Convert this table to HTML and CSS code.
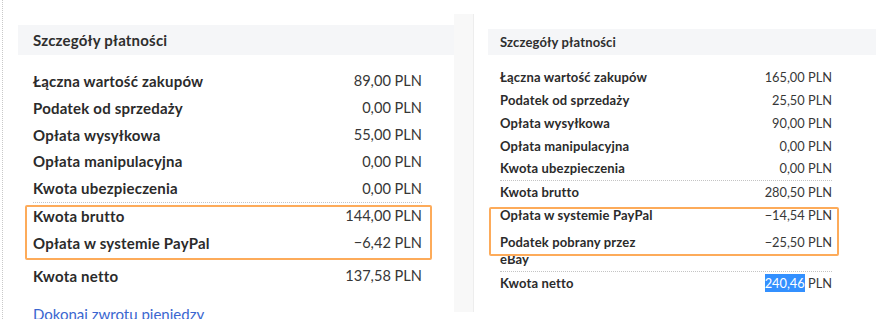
FILE: index.html
```html
<!DOCTYPE html>
<html lang="pl">
<head>
<meta charset="utf-8">
<title>Szczegóły płatności</title>
<link rel="stylesheet" href="styles.css">
</head>
<body>
<div class="page">
  <div class="edge"></div>

  <section class="panel panel-a">
    <div class="hdr">Szczegóły płatności</div>
    <div class="rows">
      <div class="group g1">
        <div class="row"><span class="lbl">Łączna wartość zakupów</span><span class="amt">89,00 PLN</span></div>
        <div class="row"><span class="lbl">Podatek od sprzedaży</span><span class="amt">0,00 PLN</span></div>
        <div class="row"><span class="lbl">Opłata wysyłkowa</span><span class="amt">55,00 PLN</span></div>
        <div class="row"><span class="lbl">Opłata manipulacyjna</span><span class="amt">0,00 PLN</span></div>
        <div class="row"><span class="lbl">Kwota ubezpieczenia</span><span class="amt">0,00 PLN</span></div>
      </div>
      <div class="group g2">
        <div class="row"><span class="lbl">Kwota brutto</span><span class="amt">144,00 PLN</span></div>
        <div class="row"><span class="lbl">Opłata w systemie PayPal</span><span class="amt">−6,42 PLN</span></div>
      </div>
      <div class="group g3">
        <div class="row"><span class="lbl">Kwota netto</span><span class="amt">137,58 PLN</span></div>
      </div>
    </div>
    <a class="link" href="#">Dokonaj zwrotu pieniędzy</a>
  </section>

  <div class="gutter"></div>

  <section class="panel panel-b">
    <div class="hdr">Szczegóły płatności</div>
    <div class="rows">
      <div class="group g1">
        <div class="row"><span class="lbl">Łączna wartość zakupów</span><span class="amt">165,00 PLN</span></div>
        <div class="row"><span class="lbl">Podatek od sprzedaży</span><span class="amt">25,50 PLN</span></div>
        <div class="row"><span class="lbl">Opłata wysyłkowa</span><span class="amt">90,00 PLN</span></div>
        <div class="row"><span class="lbl">Opłata manipulacyjna</span><span class="amt">0,00 PLN</span></div>
        <div class="row"><span class="lbl">Kwota ubezpieczenia</span><span class="amt">0,00 PLN</span></div>
      </div>
      <div class="group g2">
        <div class="row"><span class="lbl">Kwota brutto</span><span class="amt">280,50 PLN</span></div>
        <div class="row"><span class="lbl">Opłata w systemie PayPal</span><span class="amt">−14,54 PLN</span></div>
        <div class="row row-wrap"><span class="lbl">Podatek pobrany przez eBay</span><span class="amt">−25,50 PLN</span></div>
      </div>
      <div class="group g3">
        <div class="row"><span class="lbl">Kwota netto</span><span class="amt"><span class="sel">240,46</span> PLN</span></div>
      </div>
    </div>
  </section>

  <div class="mark mark-a"></div>
  <div class="mark mark-b"></div>
</div>
</body>
</html>
```

FILE: styles.css
```css
html, body {
  margin: 0;
  padding: 0;
  background: #ffffff;
}

body {
  width: 876px;
  height: 319px;
  overflow: hidden;
  font-family: "Lato", "Liberation Sans", sans-serif;
  color: #333333;
}

.page {
  position: relative;
  display: flex;
  align-items: flex-start;
  width: 876px;
  height: 319px;
  padding-left: 2px;
  box-sizing: border-box;
}

.edge {
  align-self: stretch;
  width: 0;
  border-left: 1px dotted #c9c9c9;
}

.panel {
  flex: none;
}

/* ---------- left panel ---------- */
.panel-a {
  margin-left: 15px;
  width: 436px;
  padding-top: 25px;
  font-size: 15px;
}

.panel-a .hdr {
  height: 30px;
  line-height: 30px;
  padding-left: 15px;
  background: #f5f6f8;
  font-weight: 700;
  letter-spacing: 0.2px;
  color: #2e2e2e;
}

.panel-a .rows {
  margin: 12.6px 32px 0 15px;
}

.panel-a .row {
  height: 26.8px;
}

.panel-a .lbl {
  letter-spacing: 0.2px;
}

.panel-a .amt {
  font-size: 14.6px;
}

.panel-a .g2 {
  padding-bottom: 2px;
}

.panel-a .g3 {
  margin-top: 3.4px;
}

.link {
  display: block;
  margin: 16px 0 0 15px;
  color: #3a66d0;
  text-decoration: none;
  font-size: 15px;
  line-height: 18px;
}

/* ---------- common rows ---------- */
.row {
  display: flex;
  align-items: center;
  justify-content: space-between;
}

.lbl {
  font-weight: 700;
  color: #2b2b2b;
}

.amt {
  font-weight: 400;
  color: #373737;
  white-space: nowrap;
}

.g1,
.g2 {
  border-bottom: 1px dotted #c4c4c4;
}

/* ---------- gutter ---------- */
.gutter {
  flex: none;
  width: 19px;
  height: 298px;
  margin-top: 14px;
  background: #f8f8f8;
  border-right: 1px solid #ededed;
}

/* ---------- right panel ---------- */
.panel-b {
  margin-left: 14px;
  width: 400px;
  padding-top: 29px;
  font-size: 13px;
}

.panel-b .hdr {
  height: 26px;
  line-height: 26px;
  padding-left: 12px;
  background: #f5f6f8;
  font-weight: 700;
  letter-spacing: 0.15px;
  color: #2e2e2e;
}

.panel-b .rows {
  margin: 10.8px 0 0 12px;
  width: 332px;
}

.panel-b .row {
  height: 22.8px;
}

.panel-b .lbl {
  letter-spacing: 0.15px;
}

.panel-b .amt {
  font-size: 12.8px;
}

.panel-b .row-wrap {
  height: auto;
  align-items: flex-start;
  padding: 7.6px 0 2.4px;
  line-height: 17.3px;
}

.panel-b .row-wrap .lbl {
  max-width: 150px;
}

.sel {
  background: #3390ff;
  color: #ffffff;
  padding: 1px 0;
}

/* ---------- annotation boxes ---------- */
.mark {
  position: absolute;
  box-sizing: border-box;
  border: 2px solid #fdab5a;
  border-radius: 2px;
}

.mark-a {
  left: 25px;
  top: 205px;
  width: 407px;
  height: 55px;
}

.mark-b {
  left: 489px;
  top: 207px;
  width: 350px;
  height: 49px;
}
```
